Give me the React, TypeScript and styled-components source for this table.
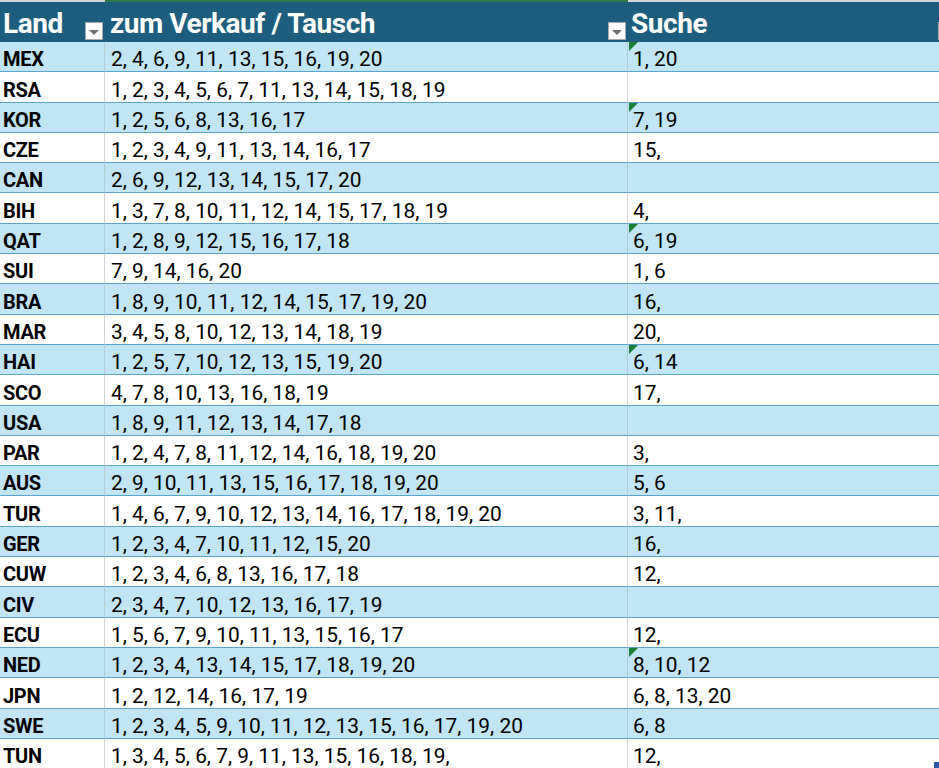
import React from "react";
import styled, { createGlobalStyle } from "styled-components";

const GlobalStyle = createGlobalStyle`
  html, body {
    margin: 0;
    padding: 0;
    background: #ffffff;
    overflow: hidden;
  }
  body {
    font-family: Roboto, "Liberation Sans", Arial, sans-serif;
  }
`;

type Row = {
  land: string;
  offer: string;
  search: string;
  flagged?: boolean;
};

const rows: Row[] = [
  { land: "MEX", offer: "2, 4, 6, 9, 11, 13, 15, 16, 19, 20", search: "1, 20", flagged: true },
  { land: "RSA", offer: "1, 2, 3, 4, 5, 6, 7, 11, 13, 14, 15, 18, 19", search: "" },
  { land: "KOR", offer: "1, 2, 5, 6, 8, 13, 16, 17", search: "7, 19", flagged: true },
  { land: "CZE", offer: "1, 2, 3, 4, 9, 11, 13, 14, 16, 17", search: "15," },
  { land: "CAN", offer: "2, 6, 9, 12, 13, 14, 15, 17, 20", search: "" },
  { land: "BIH", offer: "1, 3, 7, 8, 10, 11, 12, 14, 15, 17, 18, 19", search: "4," },
  { land: "QAT", offer: "1, 2, 8, 9, 12, 15, 16, 17, 18", search: "6, 19", flagged: true },
  { land: "SUI", offer: "7, 9, 14, 16, 20", search: "1, 6" },
  { land: "BRA", offer: "1, 8, 9, 10, 11, 12, 14, 15, 17, 19, 20", search: "16," },
  { land: "MAR", offer: "3, 4, 5, 8, 10, 12, 13, 14, 18, 19", search: "20," },
  { land: "HAI", offer: "1, 2, 5, 7, 10, 12, 13, 15, 19, 20", search: "6, 14", flagged: true },
  { land: "SCO", offer: "4, 7, 8, 10, 13, 16, 18, 19", search: "17," },
  { land: "USA", offer: "1, 8, 9, 11, 12, 13, 14, 17, 18", search: "" },
  { land: "PAR", offer: "1, 2, 4, 7, 8, 11, 12, 14, 16, 18, 19, 20", search: "3," },
  { land: "AUS", offer: "2, 9, 10, 11, 13, 15, 16, 17, 18, 19, 20", search: "5, 6" },
  { land: "TUR", offer: "1, 4, 6, 7, 9, 10, 12, 13, 14, 16, 17, 18, 19, 20", search: "3, 11," },
  { land: "GER", offer: "1, 2, 3, 4, 7, 10, 11, 12, 15, 20", search: "16," },
  { land: "CUW", offer: "1, 2, 3, 4, 6, 8, 13, 16, 17, 18", search: "12," },
  { land: "CIV", offer: "2, 3, 4, 7, 10, 12, 13, 16, 17, 19", search: "" },
  { land: "ECU", offer: "1, 5, 6, 7, 9, 10, 11, 13, 15, 16, 17", search: "12," },
  { land: "NED", offer: "1, 2, 3, 4, 13, 14, 15, 17, 18, 19, 20", search: "8, 10, 12", flagged: true },
  { land: "JPN", offer: "1, 2, 12, 14, 16, 17, 19", search: "6, 8, 13, 20" },
  { land: "SWE", offer: "1, 2, 3, 4, 5, 9, 10, 11, 12, 13, 15, 16, 17, 19, 20", search: "6, 8" },
  { land: "TUN", offer: "1, 3, 4, 5, 6, 7, 9, 11, 13, 15, 16, 18, 19,", search: "12," },
];

const Sheet = styled.div`
  position: relative;
  width: 939px;
  height: 768px;
  overflow: hidden;
`;

const Table = styled.div`
  display: grid;
  grid-template-columns: 105px 523px 330px;
  grid-template-rows: 42px;
  grid-auto-rows: 30.3px;
`;

const HeaderCell = styled.div<{ $selected?: boolean }>`
  position: relative;
  box-sizing: border-box;
  background: #1d5e7e;
  border-top: 2px solid ${(p) => (p.$selected ? "#2f7a46" : "#d6d6d6")};
  color: #ffffff;
  font-weight: 700;
  font-size: 28px;
  letter-spacing: -0.45px;
  line-height: 1;
  padding: 8px 0 0 ${(p) => (p.$selected ? "5px" : "3px")};
  white-space: nowrap;
`;

const FilterButton = styled.div`
  position: absolute;
  right: 2px;
  bottom: 2px;
  width: 18px;
  height: 18px;
  box-sizing: border-box;
  background: #ffffff;
  border: 1px solid #a8a8a8;
  display: flex;
  align-items: center;
  justify-content: center;
  &::after {
    content: "";
    width: 0;
    height: 0;
    margin-top: 3px;
    border-left: 5px solid transparent;
    border-right: 5px solid transparent;
    border-top: 5px solid #6e6e6e;
  }
`;

const Cell = styled.div<{ $band: boolean; $bold?: boolean; $pad?: number }>`
  position: relative;
  box-sizing: border-box;
  background: ${(p) => (p.$band ? "#c1e5f5" : "#ffffff")};
  border-bottom: 1px solid #5aa5d0;
  border-right: 1px solid ${(p) => (p.$band ? "#b3ccd8" : "#d4d4d4")};
  color: #000000;
  font-size: ${(p) => (p.$bold ? "20px" : "20.9px")};
  font-weight: ${(p) => (p.$bold ? 700 : 400)};
  letter-spacing: ${(p) => (p.$bold ? "-0.3px" : "0")};
  padding: 0 0 0 ${(p) => p.$pad ?? 4}px;
  display: flex;
  align-items: flex-end;
  white-space: nowrap;
`;

const ErrorMark = styled.span`
  position: absolute;
  left: 1px;
  top: 0;
  width: 0;
  height: 0;
  border-top: 9px solid #1a7f37;
  border-right: 9px solid transparent;
`;

const ResizeHandle = styled.div`
  position: absolute;
  right: 0;
  bottom: 0;
  width: 5px;
  height: 6px;
  background: #2c55a8;
`;

export default function App() {
  return (
    <>
      <GlobalStyle />
      <Sheet>
        <Table>
          <HeaderCell>
            Land
            <FilterButton />
          </HeaderCell>
          <HeaderCell $selected>
            zum Verkauf / Tausch
            <FilterButton />
          </HeaderCell>
          <HeaderCell>
            Suche
            <FilterButton />
          </HeaderCell>
          {rows.map((r, i) => {
            const band = i % 2 === 0;
            return (
              <React.Fragment key={r.land}>
                <Cell $band={band} $bold $pad={3}>
                  {r.land}
                </Cell>
                <Cell $band={band} $pad={6}>
                  {r.offer}
                </Cell>
                <Cell $band={band} $pad={5}>
                  {r.flagged && <ErrorMark />}
                  {r.search}
                </Cell>
              </React.Fragment>
            );
          })}
        </Table>
        <ResizeHandle />
      </Sheet>
    </>
  );
}
